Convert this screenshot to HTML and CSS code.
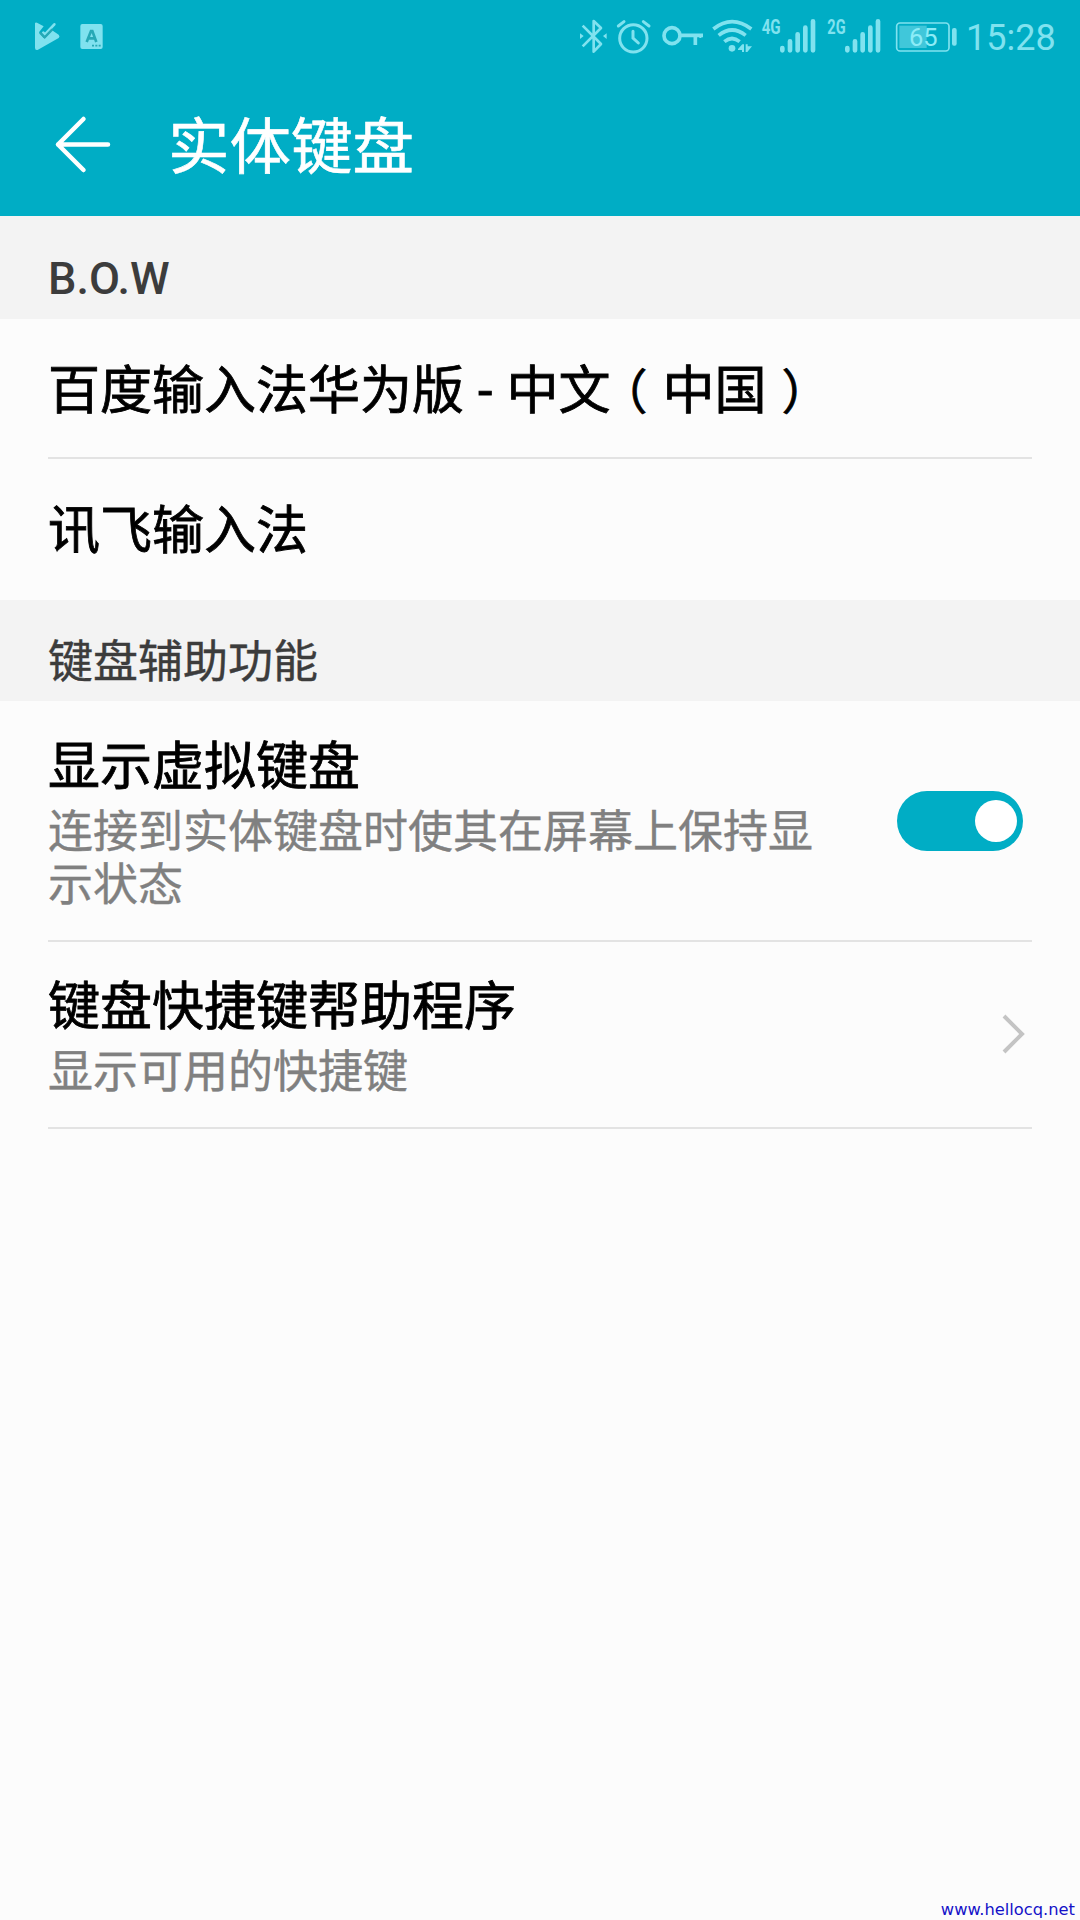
FILE: index.html
```html
<!DOCTYPE html>
<html lang="zh-CN">
<head>
<meta charset="utf-8">
<title>实体键盘</title>
<link rel="stylesheet" href="styles.css">
</head>
<body>
<header class="top">
  <div class="status">
    <svg class="ic play" viewBox="99 60 90 96" width="30" height="32"><path fill="currentColor" d="M105 70Q106 66 111 68L131 79L117 97L130 113Q134 116 139 110L156 91L176 104Q181 109 176 114L114 149Q105 152 105 143Z"/><path fill="none" stroke="currentColor" stroke-width="8" d="M130 98L135 103L163 73" stroke-linecap="round"/><path fill="none" stroke="#27a9b6" stroke-width="7" d="M120 98L134 112L157 88"/></svg>
    <svg class="ic input" viewBox="237 66 75 84" width="25" height="28"><rect x="241" y="72" width="67" height="75" rx="6" fill="currentColor"/><path fill="none" stroke="#27a9b6" stroke-width="8" d="M260 126L273 93L277 93L289 126M264 115H285"/><path stroke="#27a9b6" stroke-width="5" stroke-dasharray="6 4" d="M276 137H303"/></svg>
    <span class="spacer"></span>
    <svg class="ic bt" viewBox="54 50 93 114" width="31" height="38"><path fill="none" stroke="currentColor" stroke-width="8" stroke-linejoin="round" d="M68 76L123 131L101 154V62L123 83L68 138"/><path fill="currentColor" d="M60 99L71 107L60 116ZM140 99L129 107L140 116Z"/></svg>
    <svg class="ic alarm" viewBox="165 50 114 114" width="38" height="38"><g fill="none" stroke="currentColor" stroke-width="9" stroke-linecap="round"><circle cx="220" cy="114" r="41"/><path d="M219 93V113L235 128M175 77L192 64M250 64L267 77"/></g></svg>
    <svg class="ic key" viewBox="300 50 138 114" width="46" height="38"><g fill="none" stroke="currentColor"><circle cx="336" cy="106" r="24" stroke-width="11"/><path stroke-width="11" d="M361 105H429M406 106V134" /><path stroke-width="6" d="M421 106V113"/></g></svg>
    <svg class="ic wifi" viewBox="450 50 135 114" width="45" height="38"><g fill="none" stroke="currentColor" stroke-width="11"><path d="M460 86Q516 42 574 86"/><path d="M476 105Q516 73 557 105"/><path d="M493 124Q516 105 539 124"/></g><circle cx="516" cy="144" r="10" fill="currentColor"/><path fill="currentColor" d="M534 146L547 132H552V155H546V149H534ZM557 132H563V138H576L562 155H557Z"/></svg>
    <svg class="ic sig1" viewBox="600 50 168 114" width="56" height="38"><text x="605" y="102" class="net" textLength="57" lengthAdjust="spacingAndGlyphs">4G</text><path stroke="currentColor" stroke-width="14" stroke-linecap="round" d="M667 143V150M690 123V150M713 102V150M736 82V150M759 63V150"/></svg>
    <svg class="ic sig2" viewBox="48 50 168 114" width="56" height="38"><text x="52" y="102" class="net" textLength="55" lengthAdjust="spacingAndGlyphs">2G</text><path stroke="currentColor" stroke-width="14" stroke-linecap="round" d="M112 143V150M135 123V150M158 102V150M181 82V150M204 63V150"/></svg>
    <svg class="ic battery" viewBox="252 50 198 114" width="66" height="38"><rect x="260" y="68" width="157" height="84" rx="10" fill="none" stroke="currentColor" stroke-width="5"/><rect x="268" y="76" width="82" height="67" fill="currentColor" opacity=".5"/><rect x="426" y="83" width="14" height="53" rx="6" fill="currentColor"/><text x="297" y="138" class="pct" textLength="86" lengthAdjust="spacingAndGlyphs">65</text></svg>
    <span class="time">15:28</span>
  </div>
  <div class="bar">
    <svg class="back" viewBox="0 0 60 60" width="60" height="60"><path fill="none" stroke="#fff" stroke-width="4.500" stroke-linecap="round" stroke-linejoin="round" d="M30.500 4L5 29.500L30.500 55M5 29.500H55"/></svg>
    <h1 class="title">实体键盘</h1>
  </div>
</header>
<main>
  <h2 class="section bow">B.O.W</h2>
  <div class="row first"><div class="name">百度输入法华为版 - 中文<span class="paren open">（</span>中国<span class="paren close">）</span></div></div>
  <div class="row second"><div class="name">讯飞输入法</div></div>
  <h2 class="section assist">键盘辅助功能</h2>
  <div class="row virtual">
    <div class="text"><div class="name">显示虚拟键盘</div><div class="desc">连接到实体键盘时使其在屏幕上保持显示状态</div></div>
    <div class="switch"><div class="knob"></div></div>
  </div>
  <div class="row helper">
    <div class="text"><div class="name">键盘快捷键帮助程序</div><div class="desc">显示可用的快捷键</div></div>
    <svg class="chevron" viewBox="0 0 24 40" width="24" height="40"><path fill="none" stroke="#c4c4c4" stroke-width="4" d="M2 2L20 20L2 38"/></svg>
  </div>
</main>
<footer class="mark">www.hellocq.net</footer>
</body>
</html>
```
FILE: styles.css
```css
* { box-sizing: border-box; }
body {
  margin: 0;
  width: 1080px;
  height: 1920px;
  display: flex;
  flex-direction: column;
  background: #fcfcfc;
  color: #000;
  font-family: Roboto, "Noto Sans CJK SC", sans-serif;
  overflow: hidden;
}
h1, h2 { margin: 0; font-weight: 400; }
svg { display: block; flex: none; }

.top { height: 216px; background: #00adc5; color: #80e2ef; }
.status { display: flex; height: 72px; padding: 0 24px 0 33px; align-items: flex-start; }
.ic { margin-top: 17px; }
.play { margin-top: 20px; }
.input { margin: 22px 0 0 16px; }
.spacer { flex: 1; }
.alarm { margin-left: 6px; }
.key { margin-left: 7px; }
.wifi { margin-left: 4px; }
.sig1 { margin-left: 5px; }
.sig2 { margin-left: 10px; }
.battery { margin-left: 12px; }
.net { font: 700 59px Roboto, sans-serif; fill: currentColor; }
.pct { font: 400 77px Roboto, sans-serif; fill: #8cecf7; }
.time { width: 96px; padding-left: 6px; font-size: 36px; line-height: 42px; margin-top: 17px; white-space: nowrap; }

.bar { display: flex; height: 144px; padding-left: 53px; }
.back { margin-top: 43px; }
.title { margin-left: 55px; color: #fff; font-size: 61.500px; line-height: 80px; padding-top: 36px; -webkit-text-stroke: 0.6px; }

.section { padding-left: 48px; background: #f3f3f3; color: #3c3c3c; font-size: 45px; line-height: 60px; }
.bow { height: 103px; padding-top: 33px; font-weight: 500; }
.assist { height: 101px; padding-top: 33px; -webkit-text-stroke: 0.4px; }

.row { display: flex; margin: 0 48px; border-bottom: 2px solid #e3e3e3; }
.name { font-size: 52px; line-height: 70px; white-space: nowrap; word-spacing: 1.2px; -webkit-text-stroke: 0.8px; }
.paren { display: inline-block; width: 52px; line-height: 60px; font-size: 48px; font-feature-settings: "halt"; }
.open { padding-left: 13px; }
.close { padding-left: 15px; }
.desc { font-size: 45px; line-height: 53px; color: #808080; -webkit-text-stroke: 0.4px; }
.first { height: 140px; padding-top: 38px; }
.second { height: 141px; padding-top: 38px; border-bottom: 0; }
.virtual { height: 241px; padding-top: 32px; }
.virtual .text { width: 772px; }
.virtual .desc { margin-top: 3px; }
.switch { width: 126px; height: 60px; margin: 58px 0 0 77px; border-radius: 30px; background: #00adc5; display: flex; justify-content: flex-end; align-items: center; padding-right: 6px; }
.knob { width: 42px; height: 42px; border-radius: 50%; background: #fff; }
.helper { height: 187px; padding-top: 31px; }
.helper .text { flex: 1; }
.helper .desc { margin-top: 3px; }
.chevron { margin: 41px 6px 0 0; }
.mark { margin-top: auto; height: 20px; padding-right: 5px; text-align: right; color: #1512c8; font: 16.300px/20px "DejaVu Sans", sans-serif; }
```
